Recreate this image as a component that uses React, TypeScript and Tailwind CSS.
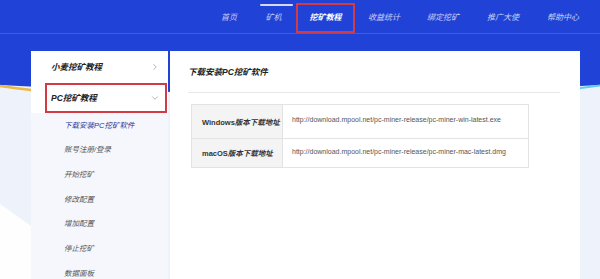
import { ChevronDown, ChevronRight } from 'lucide-react';

const font = "font-['Liberation_Sans','Noto_Sans_CJK_SC',sans-serif]";

const navItems = [
  { label: '首页', w: 'w-[44px]' },
  { label: '矿机', w: 'w-[45px]' },
  { label: '挖矿教程', w: 'w-[59px]', active: true },
  { label: '收益统计', w: 'w-[58px]' },
  { label: '绑定挖矿', w: 'w-[60px]' },
  { label: '推广大使', w: 'w-[60px]' },
  { label: '帮助中心', w: 'w-[60px]' },
];

const subItems = ['下载安装PC挖矿软件', '账号注册/登录', '开始挖矿', '修改配置', '增加配置', '停止挖矿', '数据面板'];

const rows = [
  {
    os: 'Windows',
    url: 'http://download.mpool.net/pc-miner-release/pc-miner-win-latest.exe',
    h: 'h-[34px]',
  },
  {
    os: 'macOS',
    url: 'http://download.mpool.net/pc-miner-release/pc-miner-mac-latest.dmg',
    h: 'h-[29px]',
  },
];

export default function App() {
  return (
    <div className={`relative w-[600px] h-[279px] overflow-hidden bg-[#eef2fb] ${font}`}>
      {/* background decoration */}
      <svg className="absolute inset-0" width="600" height="279" viewBox="0 0 600 279">
        <path d="M0 0 H600 V85 Q300 102 0 85 Z" fill="#2142d6" />
        <path d="M0 86 Q20 89 40 91" stroke="#e9b949" strokeWidth="2.5" fill="none" />
        <path d="M560 91 Q580 88 600 85.5" stroke="#5fd0e6" strokeWidth="2" fill="none" />
        <polygon points="0,204 31,226 31,279 0,279" fill="#ffffff" opacity="0.9" />
      </svg>

      {/* top nav */}
      <header className="relative h-[34px] border-b border-white/15 flex pl-[207px]">
        {navItems.map((item) => (
          <div
            key={item.label}
            className={`relative ${item.w} h-[30px] mt-[3px] flex items-center justify-center italic text-[8px] ${
              item.active ? 'border-2 border-[#d23a44] text-white font-bold' : 'text-white/75'
            }`}
          >
            {item.label === '矿机' && (
              <span className="absolute left-[9px] top-[1px] w-[33px] h-[2px] rounded-full bg-white/80" />
            )}
            {item.label}
          </div>
        ))}
      </header>

      <div className="relative flex pl-[31px] pt-[17px] gap-[2px]">
        {/* sidebar */}
        <aside className="w-[137px] h-[240px] bg-[#f6f7fc]">
          <div className="bg-white">
            <div className="h-[32px] flex items-center justify-between pl-[20px] pr-[8px]">
              <span className="text-[8.5px] font-bold italic text-[#222]">小麦挖矿教程</span>
              <ChevronRight size={10} strokeWidth={1.5} className="text-[#888]" />
            </div>
            <div className="h-[30px] ml-[14px] mr-[1px] border-2 border-[#d23a44] flex items-center justify-between pl-[4px] pr-[5px]">
              <span className="text-[8.5px] font-bold italic text-[#222]">PC挖矿教程</span>
              <ChevronDown size={10} strokeWidth={1.5} className="text-[#888]" />
            </div>
          </div>
          <ul>
            {subItems.map((s, i) => (
              <li
                key={s}
                className={`h-[24.7px] flex items-center pl-[33px] text-[7.5px] italic ${
                  i === 0 ? 'text-[#27389c]' : 'text-[#555]'
                }`}
              >
                {s}
              </li>
            ))}
          </ul>
        </aside>

        {/* content card */}
        <main className="w-[410px] h-[240px] bg-white pt-[15px] pl-[18px] pr-[20px]">
          <h2 className="h-[12px] flex items-center text-[8.5px] font-bold italic text-[#222]">下载安装PC挖矿软件</h2>
          <div className="mt-[14px] h-px bg-[#e8e8e8]" />
          <table className="mt-[11px] ml-[3px] w-[338px] border border-[#e3e3e3] border-collapse">
            <tbody>
              {rows.map((r) => (
                <tr key={r.os} className={`${r.h} border-b border-[#e3e3e3]`}>
                  <td className="w-[91px] bg-[#f4f4f4] border-r border-[#e3e3e3] pl-[10px] pt-[2px] text-[7.5px] font-bold text-[#333] whitespace-nowrap">
                    {r.os}
                    <span className="italic">版本下载地址</span>
                  </td>
                  <td className="pl-[9px] pb-[2px] text-[7px] text-[#555] whitespace-nowrap">{r.url}</td>
                </tr>
              ))}
            </tbody>
          </table>
        </main>
      </div>
    </div>
  );
}
